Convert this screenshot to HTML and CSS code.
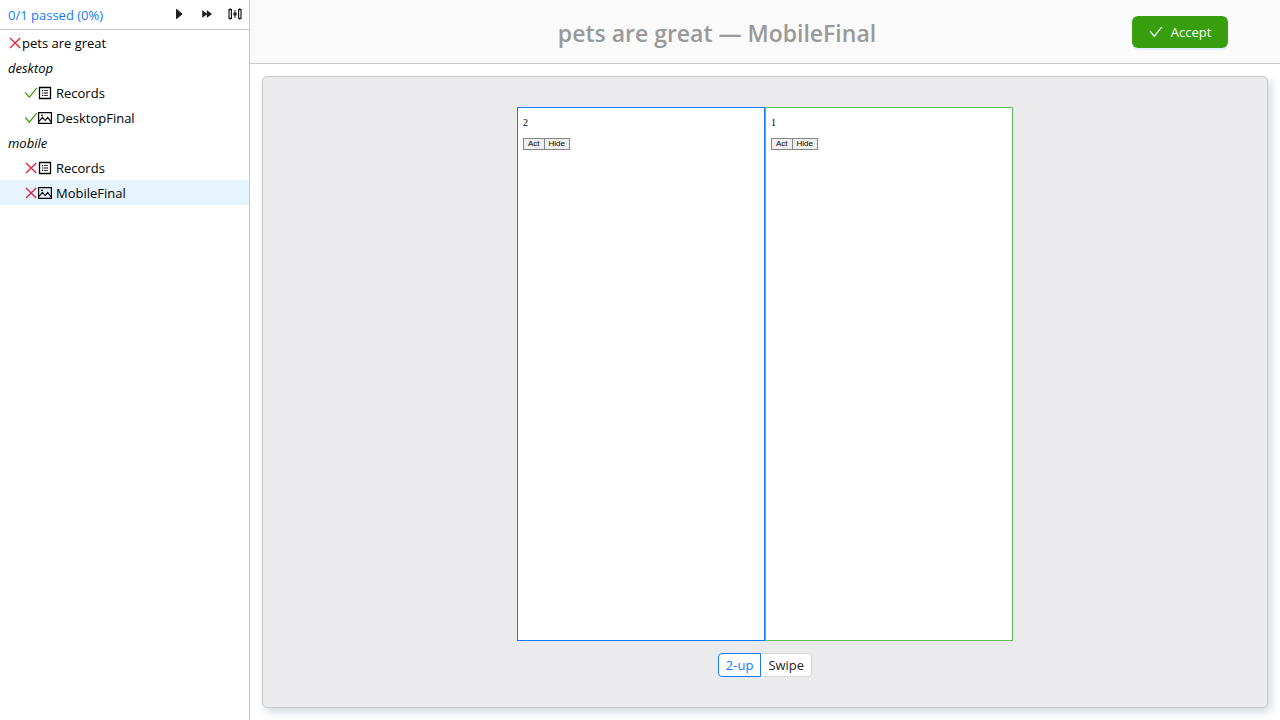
FILE: index.html
```html
<!DOCTYPE html>
<html lang="en">
<head>
<meta charset="utf-8">
<title>pets are great — MobileFinal</title>
<link rel="stylesheet" href="styles.css">
</head>
<body>
<svg class="sprite" aria-hidden="true">
  <symbol id="check" viewBox="64 64 896 896"><path d="M912 190h-69.900c-9.800 0-19.100 4.500-25.100 12.200L404.700 724.500 207 474a32 32 0 00-25.100-12.200H112c-6.700 0-10.400 7.700-6.300 12.900l273.900 347c12.800 16.200 37.400 16.200 50.300 0l488.400-618.900c4.100-5.100.4-12.800-6.300-12.800z"/></symbol>
  <symbol id="cross" viewBox="0 0 14 14"><path d="M2 2l10.200 10M12.200 2L2 12" fill="none" stroke="currentColor" stroke-width="1.300"/></symbol>
  <symbol id="list" viewBox="0 0 14 14"><path d="M1.500 1.500h11v11h-11z" fill="none" stroke="currentColor" stroke-width="1.300"/><path d="M4 4h1.200v1.200H4zM4 6.400h1.200v1.200H4zM4 8.800h1.200V10H4zM6 4.200h4v.8H6zM6 6.600h4v.8H6zM6 9h4v.8H6z"/></symbol>
  <symbol id="picture" viewBox="0 0 14 14"><path d="M.6 1.600h12.800v10.800H.6z" fill="none" stroke="currentColor" stroke-width="1.200"/><path d="M1 10.300l3.500-4 2.700 3.200 2.500-3L13 10.800" fill="none" stroke="currentColor" stroke-width="1.100"/><circle cx="4" cy="4.300" r=".9"/></symbol>
  <symbol id="play" viewBox="0 0 14 14"><path d="M4 2.400v9.200c0 .4.400.6.700.3l5.500-4.400c.3-.3.300-.7 0-1L4.700 2.100c-.3-.3-.7-.1-.7.300z"/></symbol>
  <symbol id="forward" viewBox="0 0 14 14"><path d="M2.200 3.600v6.800c0 .3.300.4.500.2l4.100-3.200v3c0 .3.300.4.500.2L11.700 7.300c.2-.2.200-.4 0-.6L7.300 3.400c-.2-.2-.5-.1-.5.200v3L2.700 3.400c-.2-.2-.5-.1-.5.200z"/></symbol>
  <symbol id="sliders" viewBox="0 0 14 14"><path d="M2.200 1.200v1.300M2.200 11.500v1.300M11.800 1.200v1.300M11.800 11.500v1.300M7 3v8" fill="none" stroke="currentColor"/><path d="M1 2.600h2.400v8.800H1zM10.600 2.600H13v8.800h-2.400z" fill="none" stroke="currentColor" stroke-width="1.200"/><path d="M5.400 5.500h3.200v3H5.400z"/></symbol>
</svg>
<div class="app">
  <aside class="sidebar">
    <div class="toolbar">
      <a class="summary" href="#">0/1 passed (0%)</a>
      <div class="tools">
        <button class="tool" type="button" aria-label="Run"><svg class="icon"><use href="#play"/></svg></button>
        <button class="tool" type="button" aria-label="Run all"><svg class="icon"><use href="#forward"/></svg></button>
        <button class="tool" type="button" aria-label="Settings"><svg class="icon"><use href="#sliders"/></svg></button>
      </div>
    </div>
    <nav class="tree">
      <div class="row"><svg class="icon fail"><use href="#cross"/></svg><span>pets are great</span></div>
      <div class="row group"><span>desktop</span></div>
      <div class="row leaf"><svg class="icon pass"><use href="#check"/></svg><svg class="icon"><use href="#list"/></svg><span class="name">Records</span></div>
      <div class="row leaf"><svg class="icon pass"><use href="#check"/></svg><svg class="icon"><use href="#picture"/></svg><span class="name">DesktopFinal</span></div>
      <div class="row group"><span>mobile</span></div>
      <div class="row leaf"><svg class="icon fail"><use href="#cross"/></svg><svg class="icon"><use href="#list"/></svg><span class="name">Records</span></div>
      <div class="row leaf selected"><svg class="icon fail"><use href="#cross"/></svg><svg class="icon"><use href="#picture"/></svg><span class="name">MobileFinal</span></div>
    </nav>
  </aside>
  <main class="main">
    <header class="header">
      <h1 class="title">pets are great — MobileFinal</h1>
      <button class="accept" type="button"><svg class="icon"><use href="#check"/></svg><span>Accept</span></button>
    </header>
    <section class="content">
      <div class="panel">
        <div class="compare">
          <div class="frame actual">
            <p class="count">2</p>
            <div class="actions"><button class="mini" type="button">Act</button><button class="mini" type="button">Hide</button></div>
          </div>
          <div class="frame expected">
            <p class="count">1</p>
            <div class="actions"><button class="mini" type="button">Act</button><button class="mini" type="button">Hide</button></div>
          </div>
        </div>
        <div class="modes">
          <button class="mode active" type="button">2-up</button><button class="mode" type="button">Swipe</button>
        </div>
      </div>
    </section>
  </main>
</div>
</body>
</html>
```
FILE: styles.css
```css
* { box-sizing: border-box; }
body {
  margin: 0;
  font-family: "Open Sans", "Noto Sans", sans-serif;
  font-size: 13px;
  color: #000;
}
button { font-family: inherit; margin: 0; }
.sprite { display: none; }
.icon { width: 14px; height: 14px; flex: none; fill: currentColor; }
.app { display: flex; height: 100vh; background: #fff; }

.sidebar { flex: none; width: 250px; border-right: 1px solid #c8c8c8; }
.toolbar {
  display: flex;
  align-items: center;
  justify-content: space-between;
  height: 30px;
  padding-left: 8px;
  border-bottom: 1px solid #c8c8c8;
}
.summary { color: #1677ff; text-decoration: none; }
.tools { display: flex; }
.tool {
  display: flex;
  align-items: center;
  justify-content: center;
  width: 28px;
  height: 28px;
  padding: 0 0 2px;
  border: 0;
  background: none;
  color: #1f1f1f;
}
.row { display: flex; align-items: center; height: 25px; padding: 0 8px; }
.leaf { padding-left: 24px; }
.group { font-style: italic; }
.name { margin-left: 4px; }
.selected { background: #e6f4ff; }
.fail { color: #e8203a; }
.pass { color: #389e0d; }

.main { flex: 1; min-width: 0; display: flex; flex-direction: column; }
.header {
  display: flex;
  align-items: center;
  height: 64px;
  padding: 0 52px;
  background: #fafafa;
  border-bottom: 1px solid #c8c8c8;
}
.title {
  flex: 1;
  margin: 0;
  padding-top: 2px;
  text-align: center;
  font-size: 23px;
  line-height: 32px;
  font-weight: 600;
  color: #999;
}
.accept {
  display: flex;
  align-items: center;
  justify-content: center;
  gap: 8px;
  min-width: 96px;
  height: 32px;
  padding: 0 16px;
  border: 0;
  border-radius: 6px;
  background: #389e0d;
  box-shadow: 0 2px 0 #e6f0ff;
  color: #fff;
  font-size: 13px;
}
.content { flex: 1; min-height: 0; display: flex; padding: 12px; }
.panel {
  flex: 1;
  display: flex;
  flex-direction: column;
  align-items: center;
  gap: 12px;
  padding: 30px;
  border: 1px solid #c8c8c8;
  border-radius: 5px;
  background: #ebebed;
  box-shadow: 3px 4px 10px rgba(60, 80, 100, 0.22);
}
.compare { flex: 1; min-height: 0; display: flex; }
.frame {
  height: 100%;
  aspect-ratio: 248 / 534;
  padding: 9px 5px;
  border: 1px solid #1677ff;
  background: #fff;
}
.expected { border-color: #5abf5a; }
.count {
  margin: 0 0 10px;
  font: 10px/11px "Liberation Serif", serif;
}
.actions { display: flex; }
.mini {
  height: 12px;
  padding: 0 4px;
  border: 1px solid #858585;
  background: #efefef;
  font: 8px/10px "Liberation Sans", sans-serif;
  color: #000;
}
.mini + .mini { margin-left: -1px; }
.modes { display: flex; }
.mode {
  height: 24px;
  padding: 0 7px;
  border: 1px solid #d9d9d9;
  border-radius: 0 4px 4px 0;
  background: #fff;
  color: #1f1f1f;
  font-size: 13px;
  line-height: 22px;
}
.mode + .mode { border-left: 0; }
.mode.active { border-color: #1677ff; border-radius: 4px 0 0 4px; color: #1677ff; }
```
